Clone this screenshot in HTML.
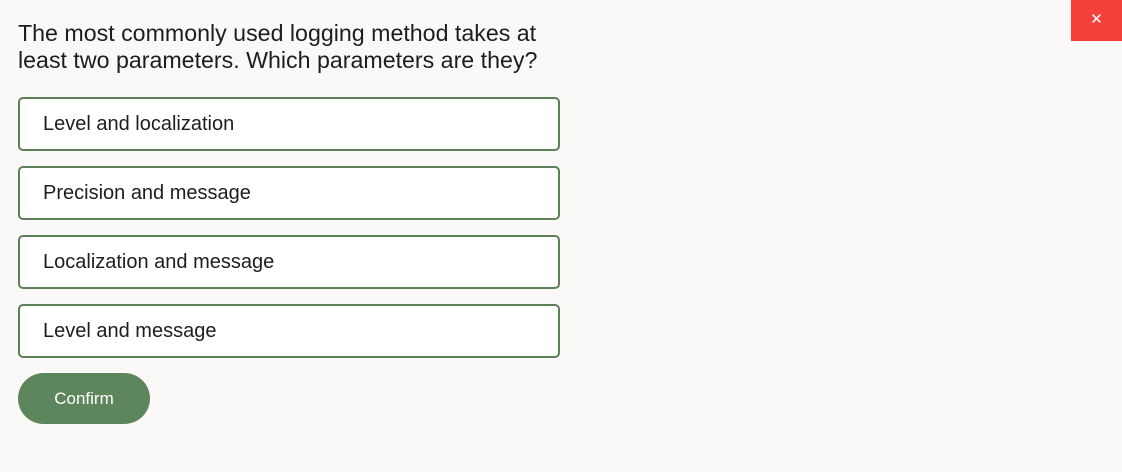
<!DOCTYPE html>
<html><head><meta charset="utf-8"><style>
html,body{margin:0;padding:0;background:#fbf9f8;width:1122px;height:472px;overflow:hidden;font-family:"Liberation Sans",sans-serif;}
.q{position:absolute;left:18px;top:20px;font-size:23.2px;line-height:27px;color:#1f1d1b;width:545px;}
.opt{position:absolute;left:18px;width:538px;height:50px;border:2px solid #5c8159;border-radius:5px;background:#fff;box-sizing:content-box;}
.opt span{position:absolute;left:23px;top:14px;font-size:20px;color:#1f1d1b;}
.btn{position:absolute;left:18px;top:373px;width:132px;height:51px;border-radius:26px;background:#5e865c;color:#fff;font-size:17px;text-align:center;line-height:51px;}
.x{position:absolute;left:1071px;top:0;width:51px;height:41px;background:#f4403a;color:#fff;font-size:15px;text-align:center;line-height:40px;}
</style></head><body>
<div class="q">The most commonly used logging method takes at least two parameters. Which parameters are they?</div>
<div class="opt" style="top:97px"><span>Level and localization</span></div>
<div class="opt" style="top:166px"><span>Precision and message</span></div>
<div class="opt" style="top:235px"><span>Localization and message</span></div>
<div class="opt" style="top:304px"><span>Level and message</span></div>
<div class="btn">Confirm</div>
<div class="x">✕</div>
</body></html>
